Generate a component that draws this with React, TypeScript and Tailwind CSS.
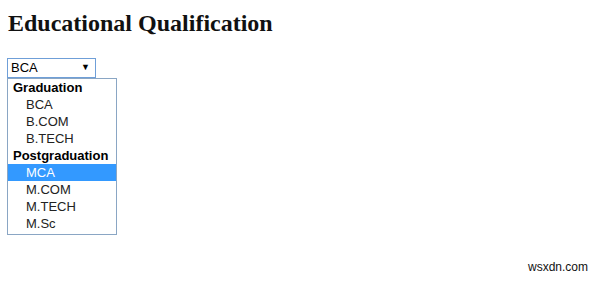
const graduation = ['BCA', 'B.COM', 'B.TECH']
const postgraduation = ['MCA', 'M.COM', 'M.TECH', 'M.Sc']

function Option({ label, selected }: { label: string; selected?: boolean }) {
  return (
    <div
      className={
        selected
          ? 'h-[17px] pl-[18px] leading-[17px] bg-[#3399ff] text-white'
          : 'h-[17px] pl-[18px] leading-[17px] text-[#222]'
      }
    >
      {label}
    </div>
  )
}

function Group({ label }: { label: string }) {
  return <div className="h-[17px] pl-[5px] leading-[17px] font-bold text-black">{label}</div>
}

export default function App() {
  return (
    <div className="relative h-[281px] w-[600px] bg-white overflow-hidden">
      <div className="px-[7px] pt-[9px]">
        <h2 className="pl-[1px] text-[24px] leading-[28px] font-bold text-[#111] font-['Liberation_Serif',serif]">
          Educational Qualification
        </h2>

        <div className="mt-[21px] font-['Liberation_Sans',Arial,sans-serif] text-[13px]">
          <div className="flex h-[20px] w-[89px] items-center justify-between border border-[#6f9fd8] pl-[3px] pr-[5px] text-black">
            <span>BCA</span>
            <span className="text-[9px]">▼</span>
          </div>

          <div className="w-[110px] border border-[#8aa6c4] pb-[2px]">
            <Group label="Graduation" />
            {graduation.map((g) => (
              <Option key={g} label={g} />
            ))}
            <Group label="Postgraduation" />
            {postgraduation.map((p) => (
              <Option key={p} label={p} selected={p === 'MCA'} />
            ))}
          </div>
        </div>
      </div>

      <div className="absolute right-[12px] bottom-[5px] text-[12px] text-[#111] font-['Liberation_Sans',Arial,sans-serif]">
        wsxdn.com
      </div>
    </div>
  )
}
